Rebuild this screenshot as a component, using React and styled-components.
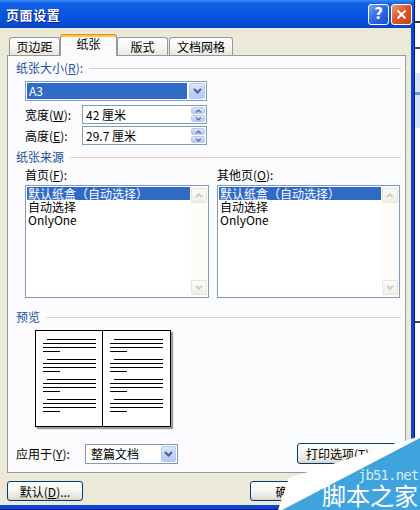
import React from "react";
import styled, { createGlobalStyle, css } from "styled-components";

const GlobalStyle = createGlobalStyle`
  html, body {
    margin: 0;
    padding: 0;
  }
  body {
    width: 420px;
    height: 510px;
    overflow: hidden;
    font-family: "Noto Sans CJK SC", "Noto Sans", sans-serif;
    font-size: 12px;
    color: #000;
  }
`;

const Screen = styled.div`
  position: relative;
  display: flex;
  width: 420px;
  height: 510px;
  overflow: hidden;
  background: #fff;
`;

const Window = styled.div`
  width: 415px;
  height: 510px;
  box-sizing: border-box;
  display: flex;
  flex-direction: column;
  background: #0a45d6;
  border-right: 1px solid #001b8a;
  border-bottom: 1px solid #001b8a;
`;

const Outside = styled.div`
  flex: 1;
  background: linear-gradient(
    to bottom,
    #fff 0 21px,
    #333 21px 23px,
    #fff 23px 47px,
    #444 47px 49px,
    #fff 49px 73px,
    #d9e4f4 73px 92px,
    #6f93d0 92px 95px,
    #d9e4f4 95px 128px,
    #fff 128px 321px,
    #444 321px 323px,
    #fff 323px 474px,
    #444 474px 476px,
    #fff 476px
  );
`;

const TitleBar = styled.div`
  height: 28px;
  flex: none;
  display: flex;
  align-items: center;
  padding: 0 2px 0 6px;
  background: linear-gradient(
    to bottom,
    #3c8ef8 0%,
    #1262e4 12%,
    #0a57dc 45%,
    #064dd4 85%,
    #0a43c2 100%
  );
`;

const Title = styled.div`
  flex: 1;
  color: #fff;
  font-weight: 700;
  font-size: 13px;
  letter-spacing: 0.6px;
  text-shadow: 1px 1px 0 #0a1e8c;
`;

const CaptionButton = styled.div`
  width: 21px;
  height: 21px;
  box-sizing: border-box;
  margin-left: 2px;
  border: 1px solid #fff;
  border-radius: 3px;
  display: flex;
  align-items: center;
  justify-content: center;
  color: #fff;
  font-family: "DejaVu Sans", sans-serif;
  font-weight: 700;
  font-size: 15px;
  ${(p) =>
    p.$close
      ? css`
          background: linear-gradient(135deg, #f09a72 0%, #e0572e 45%, #c8401a 100%);
        `
      : css`
          background: linear-gradient(135deg, #7aa8f8 0%, #2e6de8 45%, #1a4fd0 100%);
        `}
`;

const Body = styled.div`
  flex: 1;
  display: flex;
  flex-direction: column;
  margin: 0 3px 4px 0;
  padding-top: 6px;
  background: #ece9d8;
`;

const TabStrip = styled.div`
  height: 21px;
  flex: none;
  display: flex;
  align-items: flex-end;
  padding-left: 9px;
  position: relative;
  z-index: 1;
`;

const Tab = styled.div`
  box-sizing: border-box;
  width: ${(p) => p.$w}px;
  margin-left: ${(p) => p.$ml || 0}px;
  height: 18px;
  border: 1px solid #919b9c;
  border-bottom: none;
  border-radius: 3px 3px 0 0;
  background: linear-gradient(to bottom, #fff 0%, #f7f6f2 50%, #e9e7df 100%);
  text-align: center;
  line-height: 17px;
  ${(p) =>
    p.$active &&
    css`
      height: 22px;
      margin-bottom: -1px;
      line-height: 18px;
      background: #fcfcfe;
      border-top: 1px solid #e68b2c;
      box-shadow: inset 0 2px 0 #ffc83c;
    `}
`;

const Panel = styled.div`
  box-sizing: border-box;
  width: 399px;
  height: 418px;
  margin-left: 7px;
  flex: none;
  display: flex;
  flex-direction: column;
  border: 1px solid #919b9c;
  background: #fcfcfe;
  padding: 5px 4px 0 8px;
`;

const GroupHeader = styled.div`
  display: flex;
  align-items: center;
  height: 14px;
  line-height: 14px;
  margin-top: ${(p) => p.$mt || 0}px;
  color: #22509e;
  white-space: nowrap;
  &::after {
    content: "";
    flex: 1;
    height: 1px;
    margin-left: 6px;
    background: #d6d5c8;
  }
`;

const Field = styled.div`
  box-sizing: border-box;
  display: flex;
  width: ${(p) => p.$w}px;
  height: ${(p) => p.$h || 20}px;
  border: 1px solid #7f9db9;
  background: #fff;
  padding: 1px;
`;

const SelectedValue = styled.div`
  flex: 1;
  background: #316ac5;
  color: #fff;
  padding-left: 2px;
  line-height: 16px;
  margin-right: 2px;
`;

const Value = styled.div`
  flex: 1;
  padding-left: ${(p) => p.$pl || 2}px;
  line-height: ${(p) => p.$lh || 16}px;
  white-space: nowrap;
`;

const ArrowButton = styled.div`
  box-sizing: border-box;
  width: ${(p) => p.$w || 16}px;
  display: flex;
  align-items: center;
  justify-content: center;
  border: 1px solid #b8c9f3;
  border-radius: 2px;
  background: linear-gradient(to bottom, #dce7fd 0%, #c4d5fb 50%, #b3c8f7 100%);
`;

const Spinner = styled.div`
  width: 14px;
  display: flex;
  flex-direction: column;
  gap: 1px;
`;

const SpinHalf = styled(ArrowButton)`
  flex: 1;
  width: 14px;
`;

const ComboRow = styled.div`
  margin: 6px 0 0 9px;
`;

const FieldRow = styled.div`
  display: flex;
  align-items: center;
  margin-top: ${(p) => p.$mt}px;
  padding-left: 9px;
`;

const FieldLabel = styled.div`
  width: ${(p) => p.$w}px;
  line-height: 14px;
  white-space: nowrap;
`;

const SourceColumns = styled.div`
  display: grid;
  grid-template-columns: 184px 183px;
  column-gap: 8px;
  margin-top: 4px;
  padding-left: 9px;
`;

const Column = styled.div`
  display: flex;
  flex-direction: column;
`;

const ColumnLabel = styled.div`
  height: 14px;
  line-height: 14px;
`;

const ListBox = styled.div`
  box-sizing: border-box;
  height: 113px;
  margin-top: 3px;
  display: flex;
  border: 1px solid #7f9db9;
  background: #fff;
`;

const Items = styled.div`
  flex: 1;
  padding: 1px 1px 0 1px;
`;

const Item = styled.div`
  height: 13px;
  line-height: 13px;
  padding-left: 1px;
  white-space: nowrap;
  ${(p) =>
    p.$selected &&
    css`
      background: #316ac5;
      color: #fff;
    `}
`;

const ScrollBar = styled.div`
  width: 16px;
  display: flex;
  flex-direction: column;
  justify-content: space-between;
  padding: 2px 1px 2px 0;
  background: #fcfcf9;
`;

const ScrollArrow = styled.div`
  box-sizing: border-box;
  height: 15px;
  display: flex;
  align-items: center;
  justify-content: center;
  border: 1px solid #e6e5dc;
  border-radius: 2px;
  background: linear-gradient(to bottom, #fbfbf8, #efeee7);
`;

const Book = styled.div`
  box-sizing: border-box;
  width: 136px;
  height: 97px;
  margin: 6px 0 0 19px;
  display: flex;
  border: 1px solid #000;
  background: #fff;
  box-shadow: 2px 2px 1px #9c9c9c;
`;

const Page = styled.div`
  flex: 1;
  padding: 8px ${(p) => (p.$right ? 7 : 6)}px 0 7px;
  ${(p) =>
    p.$right &&
    css`
      border-left: 1px solid #000;
    `}
`;

const Para = styled.div`
  margin-top: ${(p) => (p.$first ? 0 : 7)}px;
`;

const TextLine = styled.div`
  height: 1px;
  background: #000;
  margin-top: 3px;
  margin-left: ${(p) => (p.$indent ? 4 : 0)}px;
  width: ${(p) => (p.$short ? "17px" : "auto")};
  &:first-child {
    margin-top: 0;
  }
`;

const ApplyRow = styled.div`
  display: flex;
  align-items: center;
  height: 21px;
  margin-top: 16px;
`;

const Button = styled.div`
  box-sizing: border-box;
  width: ${(p) => p.$w}px;
  height: ${(p) => p.$h || 20}px;
  margin-left: ${(p) => p.$ml || "0"};
  margin-right: ${(p) => p.$mr || 0}px;
  padding-left: ${(p) => p.$pl || 0}px;
  display: flex;
  align-items: center;
  justify-content: ${(p) => (p.$pl ? "flex-start" : "center")};
  border: 1px solid #003c74;
  border-radius: 3px;
  background: linear-gradient(to bottom, #fff 0%, #f5f4f0 50%, #e7e5dd 85%, #d6d0c5 100%);
  white-space: nowrap;
`;

const ButtonRow = styled.div`
  display: flex;
  margin-top: 8px;
  padding: 0 6px 0 7px;
`;

const Watermark = styled.div`
  position: absolute;
  left: 270px;
  top: 428px;
  width: 150px;
  height: 82px;
  z-index: 5;
`;

const WmSite = styled.span`
  position: absolute;
  left: 88px;
  top: 40px;
  font-family: "DejaVu Sans Mono", monospace;
  font-size: 14px;
  letter-spacing: -0.9px;
  line-height: 14px;
  color: #d6ebf8;
`;

const WmName = styled.span`
  position: absolute;
  left: 52px;
  top: 55px;
  font-family: "Noto Sans CJK SC", sans-serif;
  font-size: 24px;
  line-height: 24px;
  color: #fff;
`;

const Chevron = ({ up, color = "#4d6185", w = 9, h = 6, sw = 2 }) => (
  <svg width={w} height={h} viewBox="0 0 9 6">
    <path
      d={up ? "M1 5 L4.5 1.5 L8 5" : "M1 1 L4.5 4.5 L8 1"}
      fill="none"
      stroke={color}
      strokeWidth={sw}
    />
  </svg>
);

const Mn = ({ k }) => (
  <>
    (<u>{k}</u>)
  </>
);

const Paragraphs = () => (
  <>
    {[0, 1, 2, 3].map((i) => (
      <Para key={i} $first={i === 0}>
        <TextLine $indent />
        <TextLine />
        <TextLine />
        <TextLine $short />
      </Para>
    ))}
  </>
);

const Source = ({ label, k }) => (
  <Column>
    <ColumnLabel>
      {label}
      <Mn k={k} />:
    </ColumnLabel>
    <ListBox>
      <Items>
        <Item $selected>默认纸盒（自动选择）</Item>
        <Item>自动选择</Item>
        <Item>OnlyOne</Item>
      </Items>
      <ScrollBar>
        <ScrollArrow>
          <Chevron up color="#c9c8bd" w={8} h={5} />
        </ScrollArrow>
        <ScrollArrow>
          <Chevron color="#c9c8bd" w={8} h={5} />
        </ScrollArrow>
      </ScrollBar>
    </ListBox>
  </Column>
);

const SpinField = ({ value }) => (
  <Field $w={125} $h={19}>
    <Value $lh={15}>{value}</Value>
    <Spinner>
      <SpinHalf>
        <Chevron up w={7} h={4} sw={1.6} />
      </SpinHalf>
      <SpinHalf>
        <Chevron w={7} h={4} sw={1.6} />
      </SpinHalf>
    </Spinner>
  </Field>
);

export default function App() {
  return (
    <Screen>
      <GlobalStyle />
      <Window>
        <TitleBar>
          <Title>页面设置</Title>
          <CaptionButton>?</CaptionButton>
          <CaptionButton $close>
            <svg width="11" height="11" viewBox="0 0 11 11">
              <path d="M1.5 1.5 L9.5 9.5 M9.5 1.5 L1.5 9.5" stroke="#fff" strokeWidth="2" />
            </svg>
          </CaptionButton>
        </TitleBar>
        <Body>
          <TabStrip>
            <Tab $w={51}>页边距</Tab>
            <Tab $w={57} $active>
              纸张
            </Tab>
            <Tab $w={51}>版式</Tab>
            <Tab $w={64} $ml={1}>
              文档网格
            </Tab>
          </TabStrip>
          <Panel>
            <GroupHeader>
              纸张大小
              <Mn k="R" />:
            </GroupHeader>
            <ComboRow>
              <Field $w={182}>
                <SelectedValue>A3</SelectedValue>
                <ArrowButton>
                  <Chevron />
                </ArrowButton>
              </Field>
            </ComboRow>
            <FieldRow $mt={4}>
              <FieldLabel $w={57}>
                宽度
                <Mn k="W" />:
              </FieldLabel>
              <SpinField value="42 厘米" />
            </FieldRow>
            <FieldRow $mt={2}>
              <FieldLabel $w={57}>
                高度
                <Mn k="E" />:
              </FieldLabel>
              <SpinField value="29.7 厘米" />
            </FieldRow>
            <GroupHeader $mt={5}>纸张来源</GroupHeader>
            <SourceColumns>
              <Source label="首页" k="F" />
              <Source label="其他页" k="O" />
            </SourceColumns>
            <GroupHeader $mt={12}>预览</GroupHeader>
            <Book>
              <Page>
                <Paragraphs />
              </Page>
              <Page $right>
                <Paragraphs />
              </Page>
            </Book>
            <ApplyRow>
              <FieldLabel $w={69}>
                应用于
                <Mn k="Y" />:
              </FieldLabel>
              <Field $w={93}>
                <Value $pl={4}>整篇文档</Value>
                <ArrowButton $w={15}>
                  <Chevron />
                </ArrowButton>
              </Field>
              <Button $w={99} $h={21} $ml="auto" $mr={5} $pl={8}>
                打印选项
                <Mn k="T" />
                ...
              </Button>
            </ApplyRow>
          </Panel>
          <ButtonRow>
            <Button $w={76}>
              默认
              <Mn k="D" />
              ...
            </Button>
            <Button $w={75} $ml="auto">
              确定
            </Button>
            <Button $w={75} $ml="5px">
              取消
            </Button>
          </ButtonRow>
        </Body>
      </Window>
      <Outside />
      <Watermark>
        <svg width="150" height="82" viewBox="0 0 150 82">
          <polygon points="8,82 19,50 150,8 150,82" fill="#fff" />
          <polygon points="12,82 150,10 150,82" fill="#3fa4de" />
        </svg>
        <WmSite>jb51.net</WmSite>
        <WmName>脚本之家</WmName>
      </Watermark>
    </Screen>
  );
}
